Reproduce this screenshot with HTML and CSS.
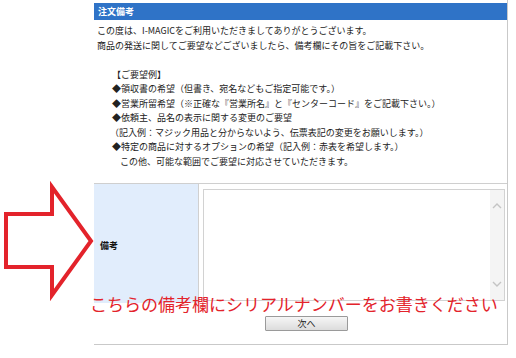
FILE: index.html
```html
<!DOCTYPE html>
<html lang="ja">

<head>
    <meta charset="UTF-8">
    <meta name="viewport" content="width=device-width, initial-scale=1.0">
    <title>注文備考</title>
    <link rel="stylesheet" href="styles.css">
</head>

<body>
    <div class="page">
        <div class="panel">
            <div class="title">注文備考</div>
            <div class="notes">
                <p>この度は、I-MAGICをご利用いただきましてありがとうございます。</p>
                <p>商品の発送に関してご要望などございましたら、備考欄にその旨をご記載下さい。</p>
                <p class="blank"></p>
                <div class="examples">
                    <p>【ご要望例】</p>
                    <p>◆領収書の希望（但書き、宛名などもご指定可能です。）</p>
                    <p>◆営業所留希望（※正確な『営業所名』と『センターコード』をご記載下さい。）</p>
                    <p>◆依頼主、品名の表示に関する変更のご要望</p>
                    <p class="sub">（記入例：マジック用品と分からないよう、伝票表記の変更をお願いします。）</p>
                    <p>◆特定の商品に対するオプションの希望（記入例：赤表を希望します。）</p>
                    <p class="sub2">この他、可能な範囲でご要望に対応させていただきます。</p>
                </div>
            </div>

            <div class="row">
                <div class="label">備考</div>
                <div class="field">
                    <div class="memo">
                        <div class="memo-input"></div>
                        <div class="memo-scroll">
                            <svg width="10" height="6" viewBox="0 0 10 6"><path d="M1 5 L5 1 L9 5" fill="none" stroke="#c4c4c4" stroke-width="1.4"/></svg>
                            <svg width="10" height="6" viewBox="0 0 10 6"><path d="M1 1 L5 5 L9 1" fill="none" stroke="#c4c4c4" stroke-width="1.4"/></svg>
                        </div>
                    </div>
                </div>
            </div>

            <div class="actions">
                <button type="button" class="next">次へ</button>
            </div>
        </div>

        <!-- annotation -->
        <svg class="arrow" width="96" height="124" viewBox="0 0 96 124">
            <path d="M6 34 L52 34 L52 7 L91 61 L52 115 L52 87 L6 87 Z" fill="none" stroke="#e3232b" stroke-width="4" stroke-linejoin="miter"/>
        </svg>
        <div class="callout">こちらの備考欄にシリアルナンバーをお書きください</div>
    </div>
</body>

</html>
```

FILE: styles.css
```css
* {
    margin: 0;
    padding: 0;
    box-sizing: border-box;
}

body {
    font-family: "Noto Sans CJK JP", "Liberation Sans", sans-serif;
    background-color: #fff;
    color: #222;
}

.page {
    position: relative;
    width: 516px;
    height: 358px;
}

.panel {
    margin-left: 94px;
    width: 414px;
    padding-top: 3px;
    border-right: 1px solid #c9c9c9;
    border-bottom: 1px solid #c9c9c9;
}

.title {
    height: 17px;
    line-height: 17px;
    padding-left: 4px;
    background-color: #2f73c7;
    color: #fff;
    font-size: 9px;
    font-weight: bold;
}

.notes {
    padding: 4px 3px 14px;
    font-size: 9px;
    line-height: 14.5px;
    white-space: nowrap;
}

.blank {
    height: 14.5px;
}

.examples {
    padding-left: 15px;
}

.examples .sub {
    text-indent: -2px;
}

.examples .sub2 {
    text-indent: 8px;
}

.row {
    display: flex;
    border-top: 1px solid #cfcfcf;
    height: 120px;
}

.label {
    width: 105px;
    display: flex;
    align-items: center;
    padding: 3px 0 0 6px;
    background-color: #e1edfc;
    border-right: 1px solid #d0d0d0;
    font-size: 9px;
    font-weight: bold;
    color: #111;
}

.field {
    flex: 1;
    padding: 5px 2px 2px 4px;
}

.memo {
    display: flex;
    height: 112px;
    border: 1px solid #d2d2d2;
    background: #fff;
}

.memo-input {
    flex: 1;
}

.memo-scroll {
    width: 14px;
    display: flex;
    flex-direction: column;
    justify-content: space-between;
    align-items: center;
    padding: 13px 0 13px;
    background-color: #f4f4f4;
}

.memo-scroll svg {
    display: block;
}

.actions {
    display: flex;
    justify-content: center;
    padding: 13px 0 13px 12px;
}

.next {
    width: 83px;
    height: 15px;
    font-family: "Noto Sans CJK JP", sans-serif;
    font-size: 9px;
    line-height: 13px;
    color: #222;
    background: linear-gradient(#f6f6f6, #dcdcdc);
    border: 1px solid #9a9a9a;
    border-radius: 1px;
}

.arrow {
    position: absolute;
    left: 0;
    top: 180px;
}

.callout {
    position: absolute;
    left: 90px;
    top: 295px;
    font-size: 17px;
    line-height: 17px;
    color: #e3232b;
    white-space: nowrap;
}
```
